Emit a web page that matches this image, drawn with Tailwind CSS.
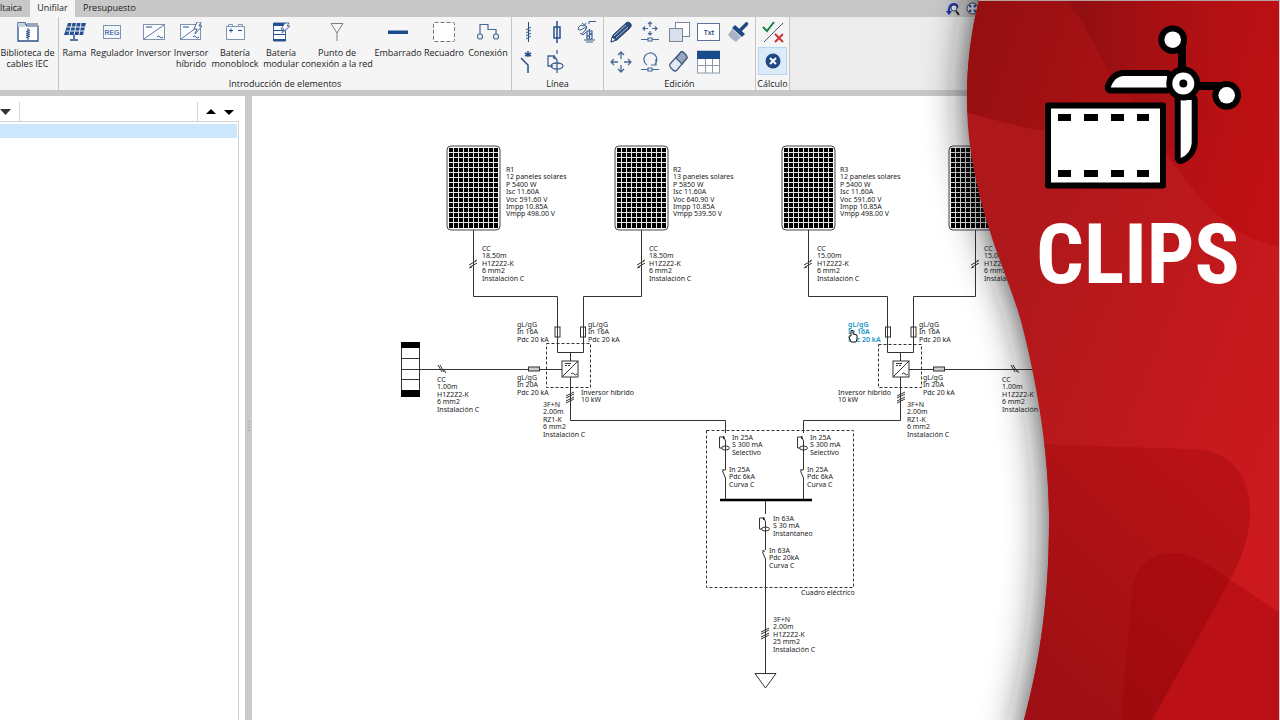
<!DOCTYPE html>
<html lang="es">
<head>
<meta charset="utf-8">
<meta name="viewport" content="width=device-width, initial-scale=1">
<title>Unifilar</title>
<script src="https://cdn.jsdelivr.net/npm/@tailwindcss/browser@4"></script>
</head>
<body class="relative flex h-screen flex-col overflow-hidden bg-[#c8c8c8] font-['Open_Sans','Noto_Sans',sans-serif] text-[9px] leading-[11px] text-[#222]">

<!-- Tabs -->
<nav class="flex h-[17px] shrink-0 items-stretch bg-[#c8c8c8]">
  <button class="w-[30px] pr-[10px] pb-[2px] text-right">ltaica</button>
  <button class="w-[45px] bg-[#f5f5f5] pb-[2px] text-center">Unifilar</button>
  <button class="w-[69px] pb-[2px] text-center">Presupuesto</button>
  <div class="ml-auto mr-[301px] flex items-center gap-[6px]">
    <button aria-label="Deshacer zoom"><svg width="14" height="14" viewBox="0 0 14 14" fill="none"><path d="M3 12C2 6 4 2 8 2c3 0 4 2 3 4" stroke="#1c2fb0" stroke-width="2"/><path d="M0 9h6l-3 4z" fill="#1c2fb0"/><circle cx="8" cy="6" r="3" fill="#dfe6ff" stroke="#444"/><path d="M10 9l3 4" stroke="#222" stroke-width="2"/></svg></button>
    <button aria-label="Encuadrar"><svg width="13" height="13" viewBox="0 0 13 13" fill="none"><circle cx="6.500" cy="6.500" r="5.500" fill="#e9eef8" stroke="#333"/><path d="M3 3l2 2M10 3L8 5M3 10l2-2M10 10L8 8" stroke="#223a9a" stroke-width="2"/></svg></button>
  </div>
</nav>

<!-- Ribbon -->
<header class="flex h-[73px] shrink-0 items-stretch bg-[#ececec]">
  <section class="flex w-[59px] border-r border-[#c4c4c4] bg-[#f5f5f5]">
    <button class="flex w-[55px] flex-col items-center whitespace-nowrap pt-[5px]">
      <svg class="h-5 w-[22px]" viewBox="0 0 22 20" fill="none"><path d="M1 19V1h7l2 3h11v15z" fill="#fff" stroke="#2c5288" stroke-width="1.300"/><path d="M10 1h11v4H10z" fill="#9aa7ba"/><path d="M1 1h7v4H1z" fill="#c9d3e0"/><path d="M11 6v12M9 10l4-2M9 12l4-2M9 14l4-2M9 16l4-2" stroke="#1d4480"/></svg>
      <span class="mt-[5px]">Biblioteca de<br>cables IEC</span>
    </button>
  </section>
  <section class="flex w-[453px] flex-col border-r border-[#c4c4c4] bg-[#f5f5f5]">
    <div class="flex items-start text-center">
      <button class="flex w-[31px] flex-col items-center whitespace-nowrap pt-[5px]">
        <svg class="h-5 w-[22px]" viewBox="0 0 22 20" fill="none"><path d="M4 1h18l-3 12H0z" fill="#24508f"/><path d="M8 1L5 13M12.500 1L10 13M17 1l-2 12M3 5h18M2 9h18" stroke="#e6edf7"/><path d="M10 13v4M6 18h8" stroke="#56779f" stroke-width="2"/></svg>
        <span class="mt-[5px]">Rama</span>
      </button>
      <button class="flex w-[44px] flex-col items-center whitespace-nowrap pt-[5px]">
        <svg class="h-5 w-[18px]" viewBox="0 0 18 20"><rect x=".5" y="3.500" width="17" height="13" fill="#f2f5fa" stroke="#7e93ae"/><text x="9" y="13" text-anchor="middle" font-family="Roboto,sans-serif" font-size="8" fill="#24508f">REG</text></svg>
        <span class="mt-[5px]">Regulador</span>
      </button>
      <button class="flex w-[39px] flex-col items-center whitespace-nowrap pt-[5px]">
        <svg class="h-5 w-[22px]" viewBox="0 0 22 20" fill="none"><rect x=".5" y="2.500" width="21" height="15" fill="#fafcff" stroke="#7e93ae"/><path d="M1 17L21 3" stroke="#5d7899"/><path d="M3 5h6M14 15q1.500-2 3 0t3 0" stroke="#24508f"/></svg>
        <span class="mt-[5px]">Inversor</span>
      </button>
      <button class="flex w-[36px] flex-col items-center whitespace-nowrap pt-[5px]">
        <svg class="h-5 w-[22px]" viewBox="0 0 22 20" fill="none"><rect x=".5" y="2.500" width="20" height="15" fill="#fafcff" stroke="#7e93ae"/><path d="M1 17L20 3" stroke="#5d7899"/><path d="M3 5h6M13 15q1.500-2 3 0t3 0" stroke="#24508f"/><path d="M17 0h4l-2 4h3l-7 8 2-5h-3z" fill="#fff" stroke="#476a98"/></svg>
        <span class="mt-[5px]">Inversor<br>híbrido</span>
      </button>
      <button class="flex w-[52px] flex-col items-center whitespace-nowrap pt-[5px]">
        <svg class="h-5 w-[19px]" viewBox="0 0 19 20" fill="none"><path d="M.500 4.500h18v13H.500zM2.500 4.500v-2h4v2M12.500 4.500v-2h4v2" fill="#fafcff" stroke="#7e93ae"/><path d="M3 8.500h4M5 6.500v4M12 8.500h4" stroke="#24508f"/></svg>
        <span class="mt-[5px]">Batería<br>monoblock</span>
      </button>
      <button class="flex w-[40px] flex-col items-center whitespace-nowrap pt-[5px]">
        <svg class="h-5 w-[18px]" viewBox="0 0 18 20" fill="none"><path d="M1.500 1h12v18h-12z" fill="#fafcff" stroke="#3c6092"/><path d="M1 1h12v3H1zM1 17h13v2H1z" fill="#24508f"/><path d="M1 8.500h12M1 12.500h12" stroke="#24508f"/><path d="M13 1h4l-2 3h3l-8 7 2-4h-3z" fill="#fff" stroke="#476a98"/></svg>
        <span class="mt-[5px]">Batería<br>modular</span>
      </button>
      <button class="flex w-[72px] flex-col items-center whitespace-nowrap pt-[5px]">
        <svg class="h-5 w-[14px]" viewBox="0 0 14 20" fill="none"><path d="M1 1.500h12L7 11zM7 11v8" stroke="#777f8a"/></svg>
        <span class="mt-[5px]">Punto de<br>conexión a la red</span>
      </button>
      <button class="flex w-[50px] flex-col items-center whitespace-nowrap pt-[5px]">
        <svg class="h-5 w-5" viewBox="0 0 20 20"><path d="M0 8.500h20v3.500H0z" fill="#194a8c"/></svg>
        <span class="mt-[5px]">Embarrado</span>
      </button>
      <button class="flex w-[42px] flex-col items-center whitespace-nowrap pt-[5px]">
        <svg class="h-5 w-[22px]" viewBox="0 0 22 20"><rect x=".5" y=".5" width="21" height="19" rx="1" fill="#fff" stroke="#6f7883" stroke-dasharray="4 2"/></svg>
        <span class="mt-[5px]">Recuadro</span>
      </button>
      <button class="flex w-[46px] flex-col items-center whitespace-nowrap pt-[5px]">
        <svg class="h-5 w-[24px]" viewBox="0 0 24 20" fill="none" stroke="#476a98" stroke-width="1.200"><path d="M4 12V2.500h8v5h8V12"/><circle cx="4" cy="14.500" r="2.500" fill="#fff"/><circle cx="20" cy="14.500" r="2.500" fill="#fff"/></svg>
        <span class="mt-[5px]">Conexión</span>
      </button>
    </div>
    <h2 class="mt-auto pb-px text-center">Introducción de elementos</h2>
  </section>

  <section class="flex w-[92px] flex-col border-r border-[#c4c4c4] bg-[#f5f5f5] text-center">
    <div class="grid grid-cols-3 gap-y-1 px-px pt-[2px]">
      <button aria-label="Cable" class="flex h-[26px] items-center justify-center"><svg width="24" height="22" viewBox="0 0 24 22" fill="none" stroke="#24508f"><path d="M12.500 1v20M10 9l5-3M10 12l5-3M10 15l5-3M10 18l5-3"/></svg></button>
      <button aria-label="Fusible" class="flex h-[26px] items-center justify-center"><svg width="24" height="22" viewBox="0 0 24 22" fill="none" stroke="#24508f" stroke-width="1.500"><path d="M12 0v22M9 6h6v11H9z"/></svg></button>
      <button aria-label="Sobretensiones" class="flex h-[26px] items-center justify-center"><svg width="24" height="24" viewBox="0 0 24 24" fill="none" stroke="#3c6092"><path d="M14 4V1.500h7M3 8l3-3 3 1 2-3M7 3l5 4-2 3M3 8q0 3 3 2l6-4M5 13l3 2 3-3M7 14l5-6"/><path d="M12 11h5v8h-5zM12 17l5-4M14.500 9v10" stroke-width="1.200"/><path d="M9 20h11M11 22h7"/></svg></button>
      <button aria-label="Interruptor" class="flex h-[26px] items-center justify-center"><svg width="24" height="24" viewBox="0 0 24 24" fill="none" stroke="#24508f" stroke-width="1.500"><path d="M12 1v6M9 3l6 3M15 3L9 6M5 8l7 7v8"/></svg></button>
      <button aria-label="Diferencial" class="flex h-[26px] items-center justify-center"><svg width="24" height="24" viewBox="0 0 24 24" fill="none" stroke="#3c6092" stroke-width="1.300"><path d="M12 0v4M9 6l3 4v13M10 6H3v10h5M8 7l2 2"/><ellipse cx="12" cy="16" rx="6" ry="3"/></svg></button>
    </div>
    <h2 class="mt-auto pb-px">Línea</h2>
  </section>

  <section class="flex w-[152px] flex-col border-r border-[#c4c4c4] bg-[#f5f5f5] text-center">
    <div class="grid grid-cols-5 gap-y-1 px-[2px] pt-[2px]">
      <button aria-label="Editar" class="flex h-[26px] items-center justify-center"><svg width="24" height="22" viewBox="0 0 24 22"><path d="M2 21l2-7L17 2q2-2 4 0l1 1q1 2-1 4L8 19z" fill="#2a4a7a" stroke="#2a4a7a"/><path d="M5 15L17 4M7 17L19 6" stroke="#b9c8dd"/><path d="M2 21l1-5 4 3z" fill="#fff" stroke="#2a4a7a"/></svg></button>
      <button aria-label="Mover elemento" class="flex h-[26px] items-center justify-center"><svg width="22" height="22" viewBox="0 0 22 22" fill="none" stroke="#476a98" stroke-width="1.200"><path d="M11 1v5M11 10v4M4 7.500h5M13 7.500h5M9 3l2-2 2 2M9 12l2 2 2-2M6 5.500l-2 2 2 2M16 5.500l2 2-2 2M2 18.500h7M13 18.500h7M9 17h4v3H9z"/></svg></button>
      <button aria-label="Copiar" class="flex h-[26px] items-center justify-center"><svg width="22" height="22" viewBox="0 0 22 22"><rect x="7.500" y="1.500" width="14" height="14" fill="#fff" stroke="#7b8694"/><rect x="1.500" y="7.500" width="13" height="13" fill="#dadfee" stroke="#7b8694"/></svg></button>
      <button aria-label="Texto" class="flex h-[26px] items-center justify-center"><svg width="24" height="20" viewBox="0 0 24 20"><rect x=".5" y="1.500" width="22" height="17" fill="#fff" stroke="#5a7598"/><text x="12" y="13" text-anchor="middle" font-family="Open Sans,sans-serif" font-weight="600" font-size="7" fill="#2a4a7a">Txt</text></svg></button>
      <button aria-label="Copiar formato" class="flex h-[26px] items-center justify-center"><svg width="22" height="22" viewBox="0 0 22 22"><path d="M12 8l7-7q3 0 2 3l-7 7z" fill="#1f4a86"/><path d="M8 4l10 9-3 3L5 7z" fill="#1f4a86"/><path d="M5 8l9 8-5 5q-4-2-8-7z" fill="#a9b2c9"/></svg></button>
      <button aria-label="Mover" class="flex h-[26px] items-center justify-center"><svg width="22" height="22" viewBox="0 0 22 22" fill="none" stroke="#476a98" stroke-width="1.300"><path d="M11 2v6M11 14v6M2 11h6M14 11h6M8 4l3-3 3 3M8 18l3 3 3-3M4 8l-3 3 3 3M18 8l3 3-3 3"/></svg></button>
      <button aria-label="Girar" class="flex h-[26px] items-center justify-center"><svg width="22" height="22" viewBox="0 0 22 22" fill="none" stroke="#476a98" stroke-width="1.200"><path d="M8 14a6.500 6.500 0 1 1 8-1M17 8v6h-5M2 18.500h7M13 18.500h7M9 17h4v3H9z"/></svg></button>
      <button aria-label="Borrar" class="flex h-[26px] items-center justify-center"><svg width="22" height="22" viewBox="0 0 22 22" stroke="#3f5b80" stroke-width="1.200"><path d="M2 13L13 1q1-1 2 0l3 3q1 1 1 3L9 19q-2 2-4 0l-2-2q-2-2-1-4z" fill="#e2eaf5"/><path d="M8 7l5-6q1-1 2 0l3 3q1 1 1 3l-5 6z" fill="#9aa8bd"/></svg></button>
      <button aria-label="Tabla" class="flex h-[26px] items-center justify-center"><svg width="24" height="24" viewBox="0 0 24 24"><rect x=".5" y="1" width="22" height="22" fill="#fff" stroke="#8d99a8"/><path d="M0 1h23v8H0z" fill="#194a8c"/><path d="M8.500 9v14M15.500 9v14M0 15.500h23" stroke="#8d99a8"/></svg></button>
    </div>
    <h2 class="mt-auto pb-px">Edición</h2>
  </section>

  <section class="flex w-[34px] flex-col items-center border-r border-[#c4c4c4] bg-[#f5f5f5]">
    <button aria-label="Calcular" class="mt-[2px] flex h-[26px] w-7 items-center justify-center"><svg width="22" height="22" viewBox="0 0 22 22" fill="none"><path d="M1 6l4 4 7-9" stroke="#178048" stroke-width="2"/><path d="M2 21L21 2" stroke="#465a78"/><path d="M13 13l8 8M21 13l-8 8" stroke="#cf3338" stroke-width="2"/></svg></button>
    <button aria-label="Cerrar cálculo" class="mt-[2px] flex h-[28px] w-[29px] items-center justify-center border border-[#b9d6f0] bg-[#dbebfa]"><svg width="16" height="16" viewBox="0 0 16 16"><circle cx="8" cy="8" r="7.500" fill="#1f4a86"/><path d="M5 5l6 6M11 5l-6 6" stroke="#fff" stroke-width="2"/></svg></button>
    <h2 class="mt-auto whitespace-nowrap pb-px">Cálculo</h2>
  </section>
</header>

<div class="h-[6px] shrink-0 bg-[#c8c8c8]"></div>

<!-- Workspace -->
<main class="flex min-h-0 flex-1">
  <aside class="flex w-[245px] shrink-0 flex-col bg-white pt-[6px]">
    <div class="flex h-[19px] items-center">
      <button aria-label="Filtro" class="w-[19px]"><svg width="12" height="6" viewBox="0 0 12 6"><path d="M0 0h11L5.500 6z" fill="#333"/></svg></button>
      <span class="h-full w-px bg-[#d4d4d4]"></span>
      <span class="ml-[177px] h-full w-px bg-[#d4d4d4]"></span>
      <button aria-label="Subir" class="ml-2"><svg width="10" height="5" viewBox="0 0 10 5"><path d="M0 5l5-5 5 5z"/></svg></button>
      <button aria-label="Bajar" class="ml-2 pt-px"><svg width="10" height="5" viewBox="0 0 10 5"><path d="M0 0h10L5 5z"/></svg></button>
    </div>
    <div class="mr-[6px] flex-1 border-r border-t border-[#d0d0d0] pr-px pt-[2px]">
      <div class="h-[14px] bg-[#cce6fb]"></div>
    </div>
  </aside>
  <div class="flex w-[7px] shrink-0 items-center justify-center bg-[#cacaca] pt-[38px]">
    <svg width="4" height="12" viewBox="0 0 4 12" stroke="#8a8a8a" stroke-dasharray="1 2"><path d="M2 0v12"/></svg>
  </div>

  <!-- Single-line diagram; drawn in window coordinates -->
  <div class="min-w-0 flex-1 bg-white">
    <svg class="block h-full w-full" fill="none" stroke="#333">
      <defs>
        <g id="panel">
          <rect x="-26.500" y="0" width="53" height="84" rx="4" fill="#fff" stroke="#444"/>
          <path d="M-24.500 2h49v80h-49z" fill="#000" stroke="none"/>
          <path d="M-20 2v80M-15 2v80M-10 2v80M-5 2v80M0 2v80M5 2v80M10 2v80M15 2v80M20 2v80M-24.500 6.500h49M-24.500 11.500h49M-24.500 16.500h49M-24.500 21.500h49M-24.500 26.500h49M-24.500 31.500h49M-24.500 36.500h49M-24.500 41.500h49M-24.500 46.500h49M-24.500 51.500h49M-24.500 56.500h49M-24.500 61.500h49M-24.500 66.500h49M-24.500 71.500h49M-24.500 76.500h49" stroke="#e4e4e4"/>
        </g>
        <g id="slash2"><path d="M-4 1l7-4M-3 3l7-4M-4 4l3-1M2-3l2-1"/></g>
        <g id="slash3"><path d="M-4-1l8-4M-4 1l8-4M-4 4l8-4M-4 6l8-4"/></g>
        <g id="slashH"><path d="M-4-4l4 7M-2-4l4 7M2 1l2 3"/></g>
        <g id="fuse"><rect x="-2.500" y="-5" width="5" height="10"/></g>
        <g id="fuseH"><rect x="-5.500" y="-2" width="11" height="4" fill="#ccc"/></g>
        <g id="inv"><rect x="-8" y="-8" width="16" height="16" fill="#fff"/><path d="M-8 8L8-8M-5-5.500h6M-5-3.500h2M-2-3.500h2M1 5q1.500-2 3 0t3 0"/></g>
        <g id="rcd"><path d="M-2-12l2 5M-2-12v3M-1-11h-5v11h3"/><ellipse cx="0" cy="0" rx="4" ry="2"/></g>
        <g id="brk"><path d="M-3-4l3 7M-3-6l2 2M-1-6l-2 2"/></g>
      </defs>
      <g transform="translate(-252 -96)">
        <use href="#panel" x="473.500" y="146"/><use href="#panel" x="641.500" y="146"/><use href="#panel" x="808.500" y="146"/><use href="#panel" x="975.500" y="146"/>
        <path d="M473.500 230v66.500h84v56h26v-56h58V230M808.500 230v66.500h79v56h26v-56h62V230"/>
        <path d="M570.500 352.500v68h155V433M900.500 352.500v68h-97V433M420 369.500h142M909 369.500h145"/>
        <use href="#slash2" x="473" y="264"/><use href="#slash2" x="641" y="264"/><use href="#slash2" x="808" y="264"/><use href="#slash2" x="975" y="264"/>
        <use href="#fuse" x="557.500" y="332"/><use href="#fuse" x="583" y="332"/><use href="#fuse" x="888" y="332"/><use href="#fuse" x="913.500" y="332"/>
        <use href="#fuseH" x="534" y="369"/><use href="#fuseH" x="939" y="369"/>
        <use href="#slashH" x="442" y="369"/><use href="#slashH" x="1015" y="369"/>
        <use href="#inv" x="570" y="369"/><use href="#inv" x="901" y="369"/>
        <use href="#slash3" x="570" y="397"/><use href="#slash3" x="901" y="397"/><use href="#slash3" x="765" y="633"/>
        <g stroke-dasharray="3 2"><rect x="546.500" y="343.500" width="44" height="44"/><rect x="878.500" y="344.500" width="43" height="43"/><rect x="706.500" y="430.500" width="147" height="157"/></g>
        <rect x="401.500" y="342.500" width="18" height="54" fill="#fff"/><path d="M401 342h19v6h-19zM401 390h19v7h-19z" fill="#000" stroke="none"/><path d="M401 358.500h19M401 369.500h19M401 379.500h19"/>
        <use href="#rcd" x="725.500" y="448"/><use href="#rcd" x="803.500" y="448"/><use href="#rcd" x="765.500" y="529"/>
        <path d="M725.500 441v29M803.500 441v29M725.500 478v22M803.500 478v22M765.500 500v14M765.500 522v28M765.500 559v114M755 673.500h21L765.500 688z"/>
        <use href="#brk" x="725.500" y="475"/><use href="#brk" x="803.500" y="475"/><use href="#brk" x="765.500" y="556"/>
        <path d="M720 500h92" stroke="#000" stroke-width="2.500"/>
        <g id="labels" class="font-['Noto_Sans','Open_Sans',sans-serif] text-[7px]" fill="#222" stroke="none"></g>
        <path d="M851 342l-2-5q0-2 2-1v-5q1-2 2 0v3l4 1v4l-1 3z" fill="#fff" stroke="#111"/>
      </g>
    </svg>
  </div>
</main>

<!-- Brand banner -->
<aside class="pointer-events-none absolute inset-y-0 right-0 w-[400px] overflow-hidden">
  <svg class="block h-full w-full" viewBox="880 0 400 720" preserveAspectRatio="xMaxYMin slice">
    <defs>
      <linearGradient id="gb" gradientUnits="userSpaceOnUse" x1="980" y1="300" x2="1280" y2="420"><stop stop-color="#ae181b"/><stop offset="1" stop-color="#cb191e"/></linearGradient>
      <linearGradient id="gt" gradientUnits="userSpaceOnUse" x1="967" y1="40" x2="1280" y2="140"><stop stop-color="#950f11"/><stop offset=".4" stop-color="#a61114"/><stop offset="1" stop-color="#c01014"/></linearGradient>
      <linearGradient id="gs" gradientUnits="userSpaceOnUse" x1="1080" y1="60" x2="1240" y2="60"><stop stop-color="#8e0e11" stop-opacity=".8"/><stop offset="1" stop-color="#b81014" stop-opacity=".3"/></linearGradient>
      <linearGradient id="gl" gradientUnits="userSpaceOnUse" x1="1040" y1="680" x2="1220" y2="480"><stop stop-color="#9e1013"/><stop offset="1" stop-color="#b91216"/></linearGradient>
      <path id="edge" d="M979 0C965 55 963 115 974 170C986 235 1010 280 1022 325C1036 380 1049 450 1049 520C1049 600 1040 660 1024 720H1279V0Z"/>
      <clipPath id="clip"><use href="#edge"/></clipPath>
      <filter id="soft" filterUnits="userSpaceOnUse" x="860" y="-80" width="520" height="880"><feGaussianBlur stdDeviation="22"/></filter>
    </defs>
    <path d="M983-80V0C969 55 967 115 978 170C990 235 1014 280 1026 325C1040 380 1053 450 1053 520C1053 600 1044 660 1028 720V800H1400V-80Z" fill="#1a1c1b" filter="url(#soft)"/>
    <g clip-path="url(#clip)">
      <path d="M960 0h320v720H960z" fill="url(#gb)"/>
      <path d="M960 0v111C1000 121 1020 127 1045 131L1150 136C1190 180 1215 235 1280 247V0z" fill="url(#gt)"/>
      <path d="M1065 0C1085 20 1098 55 1110 73C1118 86 1124 92 1130 97L1168 152L1206 125C1214 100 1212 50 1195 0z" fill="url(#gs)"/>
      <path d="M1040 444L1190 449C1235 450 1251 480 1250 515C1249 550 1232 575 1218 602L1152 720H1000V444z" fill="url(#gl)"/>
      <path d="M1121 720L1132 590C1138 560 1155 553 1175 553C1195 553 1215 570 1280 613V720z" fill="#9c0005" fill-opacity=".34"/>
    </g>
    <path d="M1279.500 0v720" stroke="#e8c8c8"/>
    <path d="M979 .5h301" stroke="#b8a0a0"/>

    <rect x="1048" y="105.500" width="115" height="80" fill="#fff" stroke="#000" stroke-width="6" stroke-linejoin="round"/>
    <path d="M1058 114h13v7h-13zM1084 114h14v7h-14zM1111 114h13v7h-13zM1137 114h12v7h-12zM1058 170h13v7h-13zM1084 170h14v7h-14zM1111 170h13v7h-13zM1137 170h12v7h-12z"/>
    <path d="M1182 44v26M1196 86h26" stroke="#000" stroke-width="8"/>
    <g fill="#fff" stroke="#000" stroke-width="12" stroke-linejoin="round" paint-order="stroke">
      <path d="M1110.700 87.500C1113 81 1117 76 1124 76H1167V87.500Z"/>
      <path d="M1180.700 100H1191.700V143C1191 151 1186 156 1180.700 158Z"/>
      <circle cx="1172.700" cy="39.700" r="8.300"/><circle cx="1226.700" cy="95.300" r="8.300"/>
      <circle cx="1183.300" cy="83.500" r="11"/>
    </g>
    <circle cx="1183.300" cy="83.500" r="4"/>
    <text x="1138" y="283" text-anchor="middle" font-family="'Roboto Condensed','Liberation Sans Narrow',Roboto,sans-serif" font-weight="700" font-size="84" fill="#fff">CLIPS</text>
  </svg>
</aside>

<script>
  // Each label: x, first baseline, text lines, optional colour
  const cc = l => ['CC', l, 'H1Z2Z2-K', '6 mm2', 'Instalación C'];
  const panel = (r, n, p, voc, v) => [r, n + ' paneles solares', 'P ' + p + ' W', 'Isc 11.60A', 'Voc ' + voc + ' V', 'Impp 10.85A', 'Vmpp ' + v + ' V'];
  const fuse = a => ['gL/gG', 'In ' + a, 'Pdc 20 kA'];
  const out = ['3F+N', '2.00m', 'RZ1-K', '6 mm2', 'Instalación C'];
  const labels = [
    [506, 172, panel('R1', 12, 5400, '591.60', '498.00')],
    [673, 172, panel('R2', 13, 5850, '640.90', '539.50')],
    [840, 172, panel('R3', 12, 5400, '591.60', '498.00')],
    [482, 251, cc('18.50m')], [649, 251, cc('18.50m')], [817, 251, cc('15.00m')], [984, 251, cc('15.00m')],
    [517, 327, fuse('16A')], [588, 327, fuse('16A')], [848, 327, fuse('16A'), '#1596c4'], [919, 327, fuse('16A')],
    [517, 380, fuse('20A')], [923, 380, fuse('20A')],
    [437, 382, cc('1.00m')], [1002, 382, cc('1.00m')],
    [581, 395, ['Inversor híbrido', '10 kW']], [838, 395, ['Inversor híbrido', '10 kW']],
    [543, 407, out], [907, 407, out],
    [732, 440, ['In 25A', 'S 300 mA', 'Selectivo']], [810, 440, ['In 25A', 'S 300 mA', 'Selectivo']],
    [729, 472, ['In 25A', 'Pdc 6kA', 'Curva C']], [807, 472, ['In 25A', 'Pdc 6kA', 'Curva C']],
    [773, 521, ['In 63A', 'S 30 mA', 'Instantaneo']],
    [769, 553, ['In 63A', 'Pdc 20kA', 'Curva C']],
    [801, 595, ['Cuadro eléctrico']],
    [773, 622, ['3F+N', '2.00m', 'H1Z2Z2-K', '25 mm2', 'Instalación C']]
  ];
  const g = document.getElementById('labels');
  for (const [x, y, lines, color] of labels) {
    lines.forEach((line, i) => {
      const t = document.createElementNS('http://www.w3.org/2000/svg', 'text');
      t.setAttribute('x', x);
      t.setAttribute('y', y + Math.round(i * 7.4));
      if (color) { t.setAttribute('fill', color); t.setAttribute('font-weight', '600'); }
      t.textContent = line;
      g.appendChild(t);
    });
  }
</script>
</body>
</html>
